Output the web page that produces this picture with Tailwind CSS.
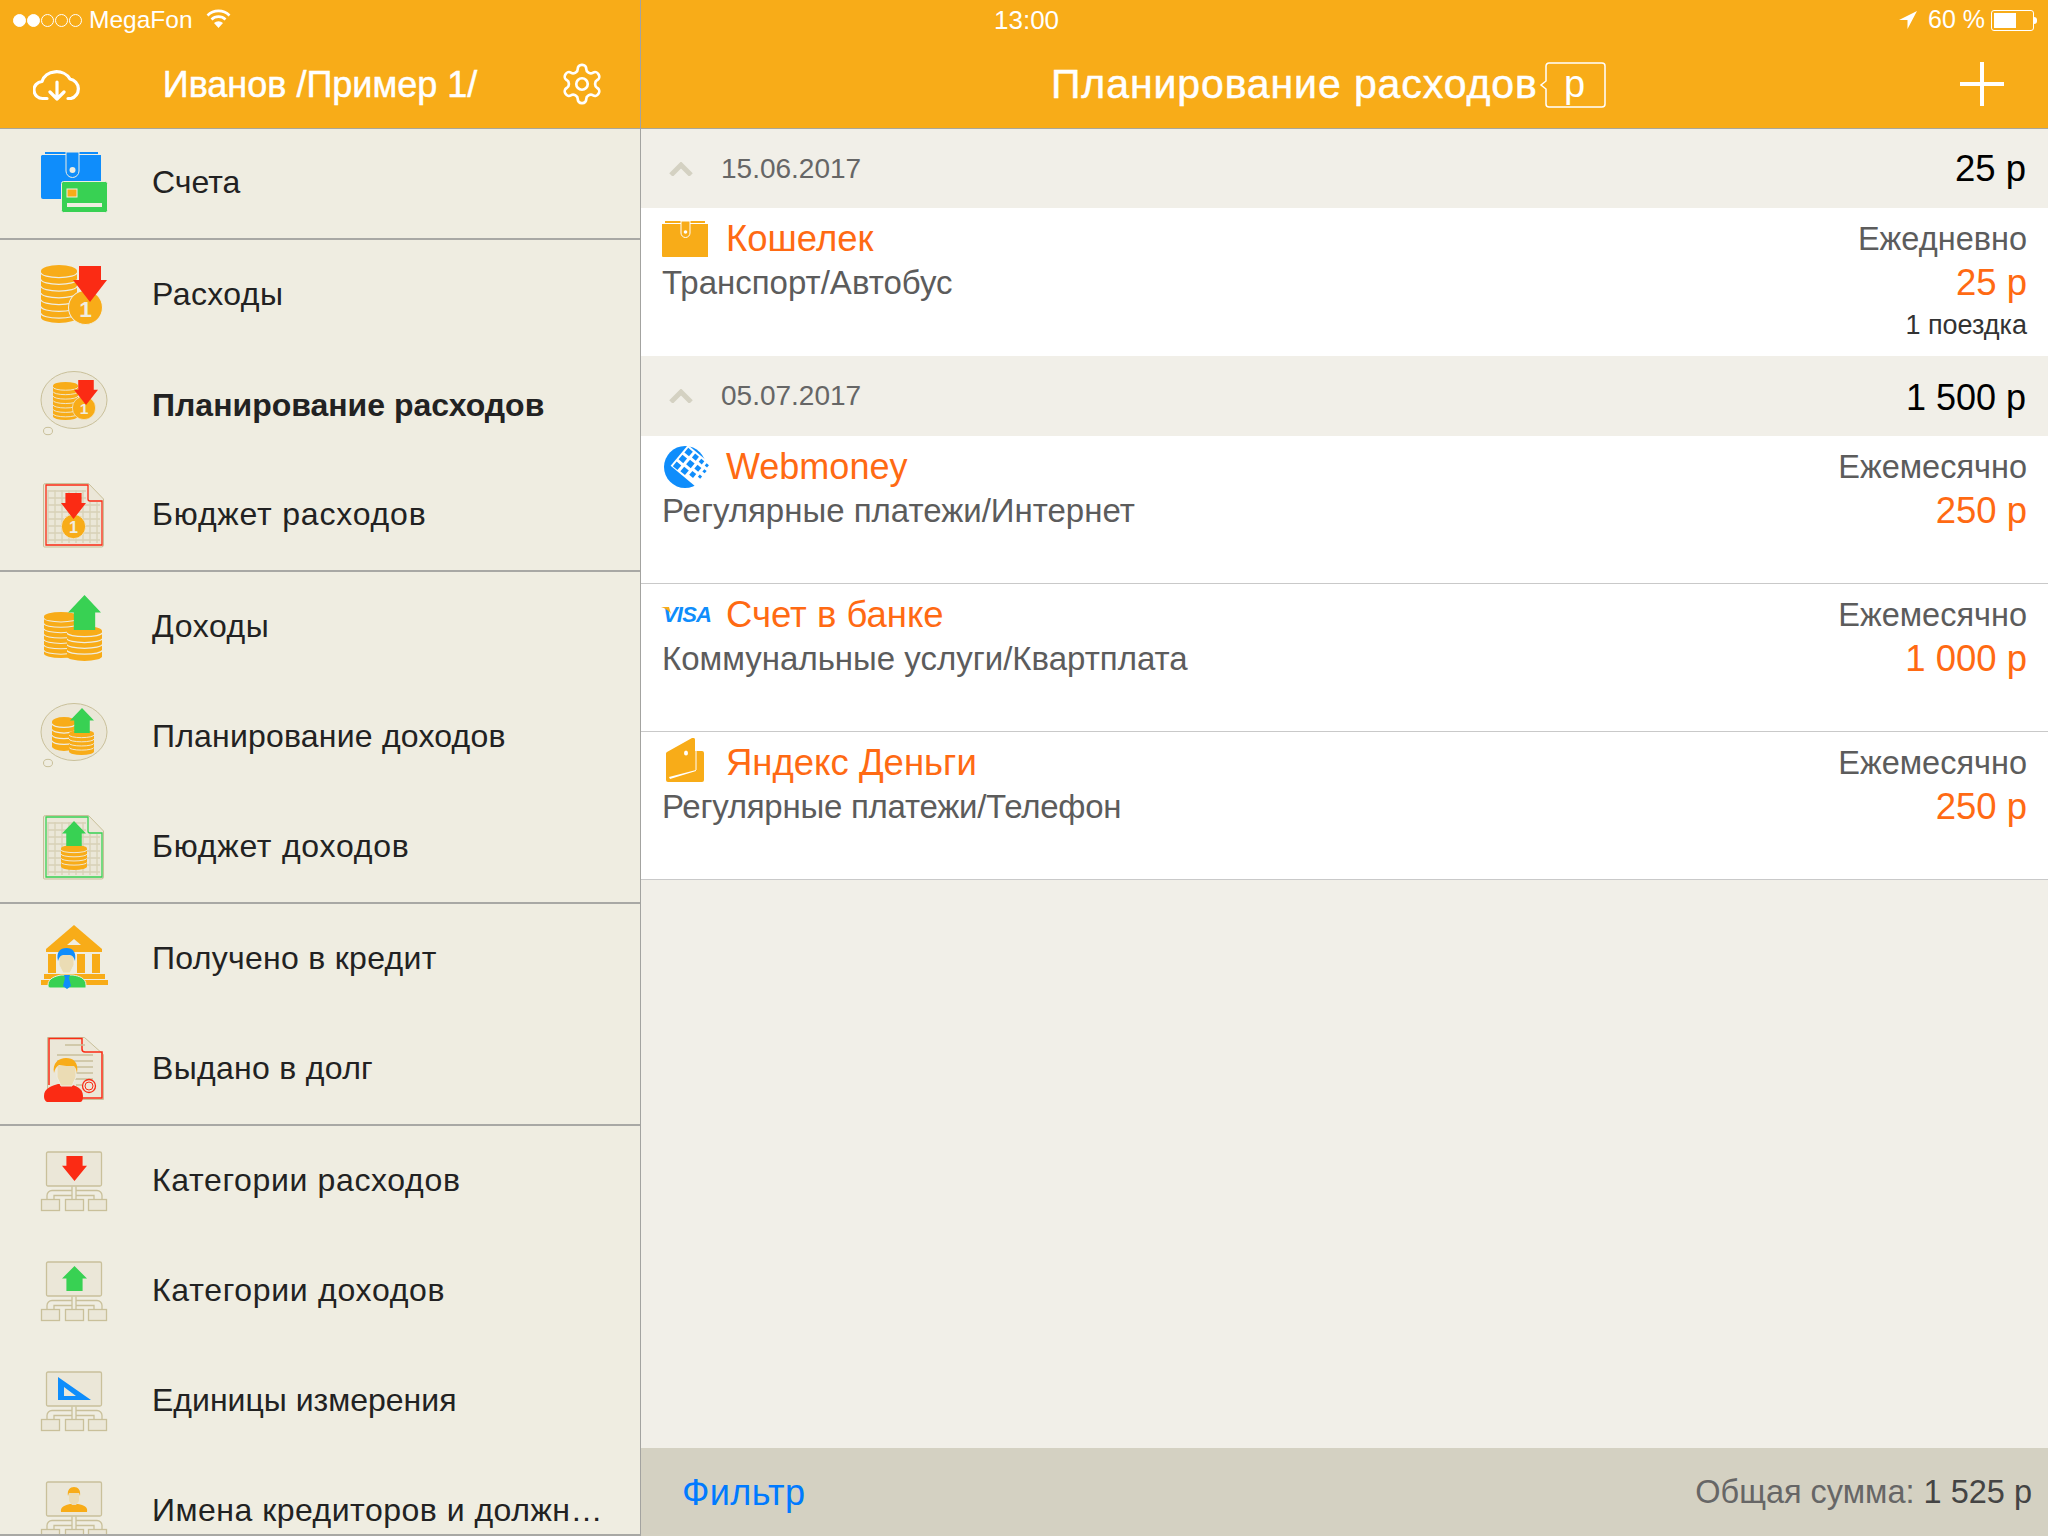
<!DOCTYPE html>
<html lang="ru">
<head>
    <meta charset="UTF-8">
    <meta name="viewport" content="width=device-width, initial-scale=1.0">
    <title>Планирование расходов</title>
    <script src="https://cdn.jsdelivr.net/npm/@tailwindcss/browser@4"></script>
</head>
<body class="[font-family:'Liberation_Sans',sans-serif] bg-[#f1efe8]">
    <!-- Shared icon parts -->
    <svg width="0" height="0" class="absolute">
        <defs>
            <symbol id="coins" viewBox="0 0 36 60" preserveAspectRatio="none">
                <path fill="#f8ac18" d="M0 6a18 6 0 0 1 36 0v48a18 6 0 0 1-36 0z"/>
                <path fill="none" stroke="#efede1" stroke-width="1.3" d="M0 8a18 5 0 0 0 36 0M0 15a18 5 0 0 0 36 0M0 22a18 5 0 0 0 36 0M0 29a18 5 0 0 0 36 0M0 36a18 5 0 0 0 36 0M0 43a18 5 0 0 0 36 0M0 50a18 5 0 0 0 36 0"/>
            </symbol>
            <symbol id="coins-short" viewBox="0 0 36 36" preserveAspectRatio="none">
                <path fill="#f8ac18" d="M0 5a18 5 0 0 1 36 0v26a18 5 0 0 1-36 0z"/>
                <path fill="none" stroke="#efede1" stroke-width="1.3" d="M0 7a18 4 0 0 0 36 0M0 13a18 4 0 0 0 36 0M0 19a18 4 0 0 0 36 0M0 25a18 4 0 0 0 36 0"/>
            </symbol>
            <symbol id="arrow-down" viewBox="0 0 34 36" preserveAspectRatio="none">
                <path fill="#fb2b14" d="M6 0h22v14h6L17 36 0 14h6z"/>
            </symbol>
            <symbol id="arrow-up" viewBox="0 0 34 36" preserveAspectRatio="none">
                <path fill="#38d153" d="M17 0l17 18h-6v18H6V18H0z"/>
            </symbol>
            <symbol id="coin-one" viewBox="0 0 34 34">
                <circle cx="17" cy="17" r="16.5" fill="#f8ac18" stroke="#efede1"/>
                <text x="17" y="26" text-anchor="middle" font-size="22" font-weight="700" fill="#efede1" font-family="Liberation Sans">1</text>
            </symbol>
            <symbol id="bubble" viewBox="0 0 68 68">
                <ellipse cx="34" cy="29" rx="33" ry="28.5" fill="#ebe7d8" stroke="#c9c09a"/>
                <ellipse cx="8" cy="60" rx="4.5" ry="3.7" fill="none" stroke="#c9c09a"/>
            </symbol>
            <symbol id="sheet" viewBox="0 0 68 68">
                <path fill="#ebe7d8" stroke="#c9c09a" d="M5.500 2.500h43l15 15.500v46a2 2 0 0 1-2 2h-57a1 1 0 0 1-1-1v-61a2 2 0 0 1 2-1.500z"/>
                <path fill="none" stroke="#d8d1b6" stroke-width="1.300" d="M8 9v53M15 9v53M22 9v53M29 9v53M36 9v53M43 9v53M50 21v41M57 21v41M8 10h38M8 17h38M8 24h52M8 31h52M8 38h52M8 45h52M8 52h52M8 59h52"/>
                <path fill="none" stroke="currentColor" stroke-width="1.300" d="M6 4h42v14a2 2 0 0 0 2 2h12v44H6z"/>
            </symbol>
            <symbol id="tree" viewBox="0 0 68 68">
                <g transform="translate(0 -1.500)">
                    <g fill="#ebe7d8" stroke="#c9c09a" stroke-width="1.300">
                        <rect x="6.500" y="6.500" width="55" height="34" rx="1.500"/>
                        <rect x="1.500" y="54" width="18" height="11"/>
                        <rect x="25.500" y="54" width="18" height="11"/>
                        <rect x="48.500" y="54" width="18" height="11"/>
                    </g>
                    <path fill="none" stroke="#c9c09a" stroke-width="1.300" d="M32 41v4H12a5 5 0 0 0-5 5v4M36 41v4h21a5 5 0 0 1 5 5v4M32 45v5H14v4M36 45v5h18v4M32 50v4M36 50v4"/>
                </g>
            </symbol>
        </defs>
    </svg>

    <div class="flex h-[1536px] w-[2048px] overflow-hidden">
        <!-- Left menu -->
        <aside class="w-[641px] shrink-0 flex flex-col border-r border-[#a3a3a0] border-b-2 border-b-[#a8a8a4] bg-[#efede1] overflow-hidden">
            <div class="h-[129px] shrink-0 bg-[#f8ac18] border-b border-[#a9a69a] text-white">
                <div class="h-[40px] flex items-center pl-[13px] text-[24.5px]">
                    <div class="flex gap-[1px]">
                        <span class="w-[13px] h-[13px] rounded-full bg-white border border-white"></span>
                        <span class="w-[13px] h-[13px] rounded-full bg-white border border-white"></span>
                        <span class="w-[13px] h-[13px] rounded-full border border-white"></span>
                        <span class="w-[13px] h-[13px] rounded-full border border-white"></span>
                        <span class="w-[13px] h-[13px] rounded-full border border-white"></span>
                    </div>
                    <span class="ml-[7px]">MegaFon</span>
                    <svg class="ml-[13px] -mt-[3px]" width="25" height="20" viewBox="0 0 25 20" fill="none" stroke="white" stroke-width="2.600"><path d="M1.500 6.500a15.500 15.500 0 0 1 22 0M5.500 10.500a10 10 0 0 1 14 0"/><path fill="white" stroke="none" d="M12.500 19l-4.500-5a6.500 6.500 0 0 1 9 0z"/></svg>
                </div>
                <div class="h-[88px] flex items-center justify-between pl-[33px] pr-[35px]">
                    <svg width="48" height="33" viewBox="0 0 48 33" fill="none" stroke="white" stroke-width="3.200" stroke-linecap="round" stroke-linejoin="round"><path d="M14 30.500h-4a8.500 8.500 0 0 1-1-17A15 13 0 0 1 37 11a10 10 0 0 1 1 19.500h-3"/><path d="M24 14v17M17 24l7 7 7-7"/></svg>
                    <span class="pt-[2px] text-[36px] [-webkit-text-stroke:0.5px_white]">Иванов /Пример 1/</span>
                    <svg width="46" height="46" viewBox="0 0 24 24" fill="none" stroke="white" stroke-width="1.400" stroke-linecap="round" stroke-linejoin="round"><path d="M12.220 2h-.44a2 2 0 0 0-2 2v.18a2 2 0 0 1-1 1.730l-.43.250a2 2 0 0 1-2 0l-.15-.08a2 2 0 0 0-2.730.730l-.22.380a2 2 0 0 0 .730 2.730l.15.100a2 2 0 0 1 1 1.720v.510a2 2 0 0 1-1 1.740l-.15.090a2 2 0 0 0-.730 2.730l.22.380a2 2 0 0 0 2.730.730l.15-.08a2 2 0 0 1 2 0l.43.250a2 2 0 0 1 1 1.730V20a2 2 0 0 0 2 2h.44a2 2 0 0 0 2-2v-.18a2 2 0 0 1 1-1.730l.43-.25a2 2 0 0 1 2 0l.15.08a2 2 0 0 0 2.730-.73l.22-.39a2 2 0 0 0-.73-2.730l-.15-.08a2 2 0 0 1-1-1.740v-.5a2 2 0 0 1 1-1.740l.15-.09a2 2 0 0 0 .73-2.730l-.22-.38a2 2 0 0 0-2.730-.73l-.15.08a2 2 0 0 1-2 0l-.43-.25a2 2 0 0 1-1-1.730V4a2 2 0 0 0-2-2z"/><circle cx="12" cy="12" r="3"/></svg>
                </div>
            </div>

            <nav class="flex flex-col text-[32px] text-[#222]">
                <a class="h-[109px] shrink-0 flex items-center pl-[40px] gap-[44px]">
                    <svg class="shrink-0" width="68" height="68" viewBox="0 0 68 68">
                        <rect x="5" y="2" width="53" height="2" fill="#0f8dfb"/>
                        <path fill="#0f8dfb" d="M2 5h59v44H3a2 2 0 0 1-2-2V6z"/>
                        <path fill="#0f8dfb" stroke="#efede1" d="M26 2h13v19a6.500 6.500 0 0 1-13 0z"/>
                        <circle cx="32.500" cy="20" r="3" fill="#efede1"/>
                        <rect x="21.500" y="31.500" width="46" height="31" rx="2" fill="#38d153" stroke="#efede1"/>
                        <rect x="27" y="39" width="10" height="8" fill="#f8ac18" stroke="#efede1"/>
                        <rect x="27" y="53" width="35" height="4" fill="#efede1"/>
                    </svg>
                    <span class="pb-[4px]">Счета</span>
                </a>
                <div class="h-[2px] shrink-0 bg-[#a8a8a4]"></div>

                <a class="h-[110px] shrink-0 flex items-center pl-[40px] gap-[44px]">
                    <svg class="shrink-0" width="68" height="68" viewBox="0 0 68 68">
                        <use href="#coins" x="1" y="4" width="36" height="58"/>
                        <use href="#coin-one" x="28" y="29" width="35" height="35"/>
                        <use href="#arrow-down" x="33" y="5" width="34" height="36"/>
                    </svg>
                    <span class="pb-[2px] tracking-[0.4px]">Расходы</span>
                </a>
                <a class="h-[110px] shrink-0 flex items-center pl-[40px] gap-[44px]">
                    <svg class="shrink-0" width="68" height="68" viewBox="0 0 68 68">
                        <use href="#bubble" width="68" height="68"/>
                        <use href="#coins" x="13" y="11" width="25" height="38"/>
                        <use href="#coin-one" x="32" y="25" width="24" height="24"/>
                        <use href="#arrow-down" x="34" y="9" width="24" height="25"/>
                    </svg>
                    <span class="pb-[1px] font-bold">Планирование расходов</span>
                </a>
                <a class="h-[110px] shrink-0 flex items-center pl-[40px] gap-[44px]">
                    <svg class="shrink-0 text-[#fb2b14]" width="68" height="68" viewBox="0 0 68 68">
                        <use href="#sheet" width="68" height="68"/>
                        <use href="#coin-one" x="21" y="33" width="25" height="25"/>
                        <use href="#arrow-down" x="21" y="12" width="25" height="26"/>
                    </svg>
                    <span class="pb-[2px] tracking-[0.8px]">Бюджет расходов</span>
                </a>
                <div class="h-[2px] shrink-0 bg-[#a8a8a4]"></div>

                <a class="h-[110px] shrink-0 flex items-center pl-[40px] gap-[44px]">
                    <svg class="shrink-0" width="68" height="68" viewBox="0 0 68 68">
                        <use href="#coins" x="4" y="19" width="34" height="46"/>
                        <use href="#coins-short" x="27" y="33" width="35" height="35"/>
                        <use href="#arrow-up" x="28" y="2" width="33" height="35"/>
                    </svg>
                    <span class="pb-[2px] tracking-[0.6px]">Доходы</span>
                </a>
                <a class="h-[110px] shrink-0 flex items-center pl-[40px] gap-[44px]">
                    <svg class="shrink-0" width="68" height="68" viewBox="0 0 68 68">
                        <use href="#bubble" width="68" height="68"/>
                        <use href="#coins-short" x="12" y="14" width="24" height="34"/>
                        <use href="#coins-short" x="29" y="27" width="25" height="25"/>
                        <use href="#arrow-up" x="30" y="5" width="24" height="25"/>
                    </svg>
                    <span class="pb-[2px] tracking-[0.2px]">Планирование доходов</span>
                </a>
                <a class="h-[110px] shrink-0 flex items-center pl-[40px] gap-[44px]">
                    <svg class="shrink-0 text-[#38d153]" width="68" height="68" viewBox="0 0 68 68">
                        <use href="#sheet" width="68" height="68"/>
                        <use href="#coins-short" x="21" y="32" width="26" height="25"/>
                        <use href="#arrow-up" x="22" y="8" width="24" height="25"/>
                    </svg>
                    <span class="pb-[2px] tracking-[0.75px]">Бюджет доходов</span>
                </a>
                <div class="h-[2px] shrink-0 bg-[#a8a8a4]"></div>

                <a class="h-[110px] shrink-0 flex items-center pl-[40px] gap-[44px]">
                    <svg class="shrink-0" width="68" height="68" viewBox="0 0 68 68">
                        <path fill="#f8ac18" d="M34 0l28 24v3H6v-3z"/>
                        <path fill="#efede1" d="M34 14l7 6H27z"/>
                        <path fill="#f8ac18" d="M8 29h8v19H8zM37 29h8v19h-8zM52 29h8v19h-8zM4 49h61v5H4zM1 55h67v5H1z"/>
                        <path fill="#38d153" stroke="#efede1" d="M8 60c0-7 8-9 13-10h12c6 1 13 3 13 10v3H10a2 2 0 0 1-2-2z"/>
                        <path fill="#ebdcb4" stroke="#efede1" d="M19 27h15v13l-4 8h-7l-4-8z"/>
                        <path fill="#0f8dfb" d="M18 36c-2-9 2-13 8.500-13s10 4 8.500 13c-1-4-3-6-5-6h-7c-2 0-4 2-5 6z"/>
                        <path fill="#0f8dfb" d="M24 50h6l-1 3 2 8-4 3-4-3 2-8z"/>
                    </svg>
                    <span class="pb-[2px] tracking-[0.3px]">Получено в кредит</span>
                </a>
                <a class="h-[110px] shrink-0 flex items-center pl-[40px] gap-[44px]">
                    <svg class="shrink-0" width="68" height="68" viewBox="0 0 68 68">
                        <path fill="#ebe7d8" stroke="#c9c09a" d="M7.500 2.500h37l19 17v45h-56z"/>
                        <path fill="none" stroke="#fb2b14" stroke-width="1.500" d="M9 50V3.500h33V14a3 3 0 0 0 3 3h17v46H36"/>
                        <path stroke="#c9c09a" stroke-width="1.300" d="M25 10h20M17 20h36M17 26h36M33 32h20M33 38h20M33 44h20M36 50h6M36 56h6"/>
                        <circle cx="49" cy="51" r="6.500" fill="none" stroke="#fb2b14" stroke-width="1.300"/>
                        <circle cx="49" cy="51" r="4" fill="none" stroke="#fb2b14"/>
                        <g transform="translate(4 0)">
                            <path fill="#fb2b14" d="M4 67c-2 0-4-2-4-6 0-8 8-10 14-12h11c7 2 14 4 14 12 0 4-1 6-3 6z"/>
                            <path fill="#ebdcb4" stroke="#efede1" d="M13 30h19v12l-4 9h-11l-4-9z"/>
                            <path fill="#f8ac18" d="M10 38c-2-10 5-15 12-15s13 4 11 15c-1-4-1-5-3-7-5 0-10 0-15-1-3 2-4 4-5 8z"/>
                        </g>
                    </svg>
                    <span class="pb-[2px] tracking-[0.3px]">Выдано в долг</span>
                </a>
                <div class="h-[2px] shrink-0 bg-[#a8a8a4]"></div>

                <a class="h-[110px] shrink-0 flex items-center pl-[40px] gap-[44px]">
                    <svg class="shrink-0" width="68" height="68" viewBox="0 0 68 68">
                        <use href="#tree" width="68" height="68"/>
                        <use href="#arrow-down" x="22" y="9" width="25" height="25"/>
                    </svg>
                    <span class="pb-[2px] tracking-[0.65px]">Категории расходов</span>
                </a>
                <a class="h-[110px] shrink-0 flex items-center pl-[40px] gap-[44px]">
                    <svg class="shrink-0" width="68" height="68" viewBox="0 0 68 68">
                        <use href="#tree" width="68" height="68"/>
                        <use href="#arrow-up" x="22" y="9" width="25" height="25"/>
                    </svg>
                    <span class="pb-[2px] tracking-[0.7px]">Категории доходов</span>
                </a>
                <a class="h-[110px] shrink-0 flex items-center pl-[40px] gap-[44px]">
                    <svg class="shrink-0" width="68" height="68" viewBox="0 0 68 68">
                        <use href="#tree" width="68" height="68"/>
                        <path fill="#0f8dfb" fill-rule="evenodd" d="M18 10l33 23H18zM24 20v9h12z"/>
                    </svg>
                    <span class="pb-[2px]">Единицы измерения</span>
                </a>
                <a class="h-[110px] shrink-0 flex items-center pl-[40px] gap-[44px]">
                    <svg class="shrink-0" width="68" height="68" viewBox="0 0 68 68">
                        <use href="#tree" width="68" height="68"/>
                        <path fill="#f8ac18" d="M21 35c-1-5 4-7 9-8h8c6 1 10 3 9 8z"/>
                        <path fill="#ebdcb4" d="M29 15h10v9l-3 4h-4l-3-4z"/>
                        <path fill="#f8ac18" d="M28 19c-1-6 2-9 6-9s7 3 6 9l-1-3H29z"/>
                    </svg>
                    <span class="pb-[2px] tracking-[0.5px] whitespace-nowrap">Имена кредиторов и должн…</span>
                </a>
            </nav>
        </aside>

        <!-- Right content -->
        <main class="flex-1 flex flex-col min-w-0">
            <div class="h-[129px] shrink-0 bg-[#f8ac18] border-b border-[#a9a69a] text-white">
                <div class="h-[40px] flex items-center text-[25px]">
                    <span class="ml-[353px] text-[26px]">13:00</span>
                    <svg class="ml-auto" width="20" height="20" viewBox="0 0 20 20"><path fill="white" d="M19 1L1 10h8.500v9z"/></svg>
                    <span class="ml-[10px]">60 %</span>
                    <div class="ml-[6px] mr-[11px] flex items-center">
                        <div class="w-[43px] h-[21px] border border-white rounded-[3px] p-[2px]">
                            <div class="w-[60%] h-full bg-white"></div>
                        </div>
                        <div class="w-[3px] h-[7px] bg-white rounded-r-sm"></div>
                    </div>
                </div>
                <div class="h-[88px] flex items-center">
                    <span class="ml-[410px] pt-[2px] text-[41px] tracking-[0.9px] [-webkit-text-stroke:0.5px_white] whitespace-nowrap">Планирование расходов</span>
                    <div class="relative ml-[1px] mt-[2px] w-[67px] h-[46px] flex items-center justify-center text-[38px]">
                        <svg class="absolute inset-0" width="67" height="46" viewBox="0 0 67 46" fill="none" stroke="white" stroke-width="1.500"><path d="M10 1h53a3 3 0 0 1 3 3v38a3 3 0 0 1-3 3H10a3 3 0 0 1-3-3V27l-5-4 5-4V4a3 3 0 0 1 3-3z"/></svg>
                        <span class="relative ml-[5px] -mt-[2px]">р</span>
                    </div>
                    <svg class="ml-auto mr-[44px]" width="44" height="44" viewBox="0 0 44 44" fill="white"><path d="M20 0h4v20h20v4H24v20h-4V24H0v-4h20z"/></svg>
                </div>
            </div>

            <div class="flex-1 flex flex-col">
                <!-- 15.06.2017 -->
                <div class="h-[79px] shrink-0 flex items-center pl-[28px] pr-[22px]">
                    <svg width="24" height="14" viewBox="0 0 24 14" fill="none" stroke="#d4d1c2" stroke-width="5"><path d="M2 13l10-10 10 10"/></svg>
                    <span class="ml-[28px] text-[28px] text-[#666]">15.06.2017</span>
                    <span class="ml-auto pt-[2px] text-[36.5px] text-black">25 р</span>
                </div>
                <div class="h-[148px] shrink-0 bg-white flex pl-[20px] pr-[21px] pt-[9px]">
                    <div class="flex-1">
                        <div class="h-[44px] flex items-center">
                            <svg class="shrink-0 mr-[1px]" width="64" height="36" viewBox="0 0 64 36">
                                <path fill="#f8ac18" d="M1 3h46v33H2a1 1 0 0 1-1-1z"/>
                                <path fill="#f8ac18" d="M4 0h40v2H4z"/>
                                <path fill="#f8ac18" stroke="white" d="M20 0h9v12a4.500 4.500 0 0 1-9 0z"/>
                                <circle cx="24.500" cy="11" r="1.800" fill="white"/>
                            </svg>
                            <span class="text-[36.5px] text-[#ff6a13]">Кошелек</span>
                        </div>
                        <div class="h-[44px] pb-[1px] pl-[1px] flex items-center text-[33px] text-[#5c5c5c]">Транспорт/Автобус</div>
                    </div>
                    <div class="flex flex-col items-end">
                        <div class="h-[44px] flex items-center text-[32.5px] text-[#5c5c5c]">Ежедневно</div>
                        <div class="h-[44px] flex items-center text-[36.5px] text-[#ff6a13]">25 р</div>
                        <div class="h-[40px] flex items-center text-[27px] text-[#333]">1 поездка</div>
                    </div>
                </div>

                <!-- 05.07.2017 -->
                <div class="h-[80px] shrink-0 flex items-center pl-[28px] pr-[22px]">
                    <svg width="24" height="14" viewBox="0 0 24 14" fill="none" stroke="#d4d1c2" stroke-width="5"><path d="M2 13l10-10 10 10"/></svg>
                    <span class="ml-[28px] text-[28px] text-[#666]">05.07.2017</span>
                    <span class="ml-auto pt-[3px] text-[36px] text-black">1 500 р</span>
                </div>
                <div class="h-[148px] shrink-0 bg-white border-b border-[#c9c9c9] flex pl-[20px] pr-[21px] pt-[9px]">
                    <div class="flex-1">
                        <div class="h-[44px] flex items-center">
                            <svg class="shrink-0 mr-[1px]" width="64" height="44" viewBox="0 0 64 44">
                                <circle cx="24" cy="22" r="21" fill="#0f8dfb"/>
                                <g transform="translate(27 0) rotate(40)">
                                    <rect x="0" y="0" width="34" height="27" fill="white"/>
                                    <g fill="#0f8dfb">
                                        <rect x="2" y="2" width="6" height="6"/>
                                        <rect x="11" y="2" width="5" height="5"/>
                                        <rect x="19" y="2" width="4" height="4"/>
                                        <rect x="26" y="2" width="3" height="3"/>
                                        <rect x="2" y="11" width="6" height="6"/>
                                        <rect x="11" y="10" width="6" height="6"/>
                                        <rect x="20" y="9" width="5" height="5"/>
                                        <rect x="28" y="8" width="3" height="3"/>
                                        <rect x="2" y="20" width="6" height="6"/>
                                        <rect x="11" y="19" width="6" height="6"/>
                                        <rect x="20" y="17" width="5" height="5"/>
                                        <rect x="28" y="15" width="3" height="3"/>
                                    </g>
                                </g>
                            </svg>
                            <span class="text-[36px] text-[#ff6a13]">Webmoney</span>
                        </div>
                        <div class="h-[44px] pb-[1px] pl-[1px] flex items-center text-[33px] text-[#5c5c5c]">Регулярные платежи/Интернет</div>
                    </div>
                    <div class="flex flex-col items-end">
                        <div class="h-[44px] flex items-center text-[32.5px] text-[#5c5c5c]">Ежемесячно</div>
                        <div class="h-[44px] flex items-center text-[36.5px] text-[#ff6a13]">250 р</div>
                    </div>
                </div>
                <div class="h-[148px] shrink-0 bg-white border-b border-[#c9c9c9] flex pl-[20px] pr-[21px] pt-[9px]">
                    <div class="flex-1">
                        <div class="h-[44px] flex items-center">
                            <div class="relative w-[65px] shrink-0 text-[22px] leading-none font-bold italic tracking-[-0.8px] text-[#0f8dfb] pl-[2px]">VISA
                                <svg class="absolute left-0 top-[3px]" width="11" height="8" viewBox="0 0 11 8"><path fill="#f8ac18" d="M0 0h8l2 7C7 3 4 1 0 0z"/></svg>
                            </div>
                            <span class="text-[36.5px] text-[#ff6a13]">Счет в банке</span>
                        </div>
                        <div class="h-[44px] pb-[1px] pl-[1px] flex items-center text-[33px] text-[#5c5c5c]">Коммунальные услуги/Квартплата</div>
                    </div>
                    <div class="flex flex-col items-end">
                        <div class="h-[44px] flex items-center text-[32.5px] text-[#5c5c5c]">Ежемесячно</div>
                        <div class="h-[44px] flex items-center text-[36.5px] text-[#ff6a13]">1 000 р</div>
                    </div>
                </div>
                <div class="h-[148px] shrink-0 bg-white border-b border-[#c9c9c9] flex pl-[20px] pr-[21px] pt-[9px]">
                    <div class="flex-1">
                        <div class="h-[44px] flex items-center">
                            <svg class="shrink-0 mr-[1px] -translate-y-[3px]" width="64" height="45" viewBox="0 0 64 45">
                                <path fill="#f8ac18" d="M6 14L31 0a2 2 0 0 1 3 2v11h7a2 2 0 0 1 2 2v27a2 2 0 0 1-2 2H7a2 2 0 0 1-2-2V16a2 2 0 0 1 1-2z"/>
                                <path fill="white" d="M9 41l26-8v-1L8 39z"/>
                                <path fill="none" stroke="white" stroke-width="1" d="M35 32V13"/>
                                <ellipse cx="25" cy="15" rx="2" ry="2.500" fill="white"/>
                            </svg>
                            <span class="text-[36.5px] text-[#ff6a13]">Яндекс Деньги</span>
                        </div>
                        <div class="h-[44px] pb-[1px] pl-[1px] flex items-center text-[33px] tracking-[-0.25px] text-[#5c5c5c]">Регулярные платежи/Телефон</div>
                    </div>
                    <div class="flex flex-col items-end">
                        <div class="h-[44px] flex items-center text-[32.5px] text-[#5c5c5c]">Ежемесячно</div>
                        <div class="h-[44px] flex items-center text-[36.5px] text-[#ff6a13]">250 р</div>
                    </div>
                </div>
            </div>

            <!-- Footer -->
            <footer class="h-[88px] shrink-0 bg-[#d4d1c2] flex items-center justify-between pl-[41px] pr-[16px]">
                <span class="pt-[1px] text-[36px] tracking-[0.4px] text-[#007aff]">Фильтр</span>
                <span class="pt-[1px] text-[32.5px] text-[#666]">Общая сумма: <span class="text-[#444]">1 525 р</span></span>
            </footer>
        </main>
    </div>
</body>
</html>
